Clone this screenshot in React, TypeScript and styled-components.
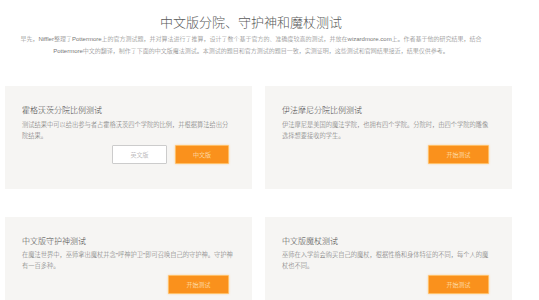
import React from "react";
import styled, { createGlobalStyle } from "styled-components";

const GlobalStyle = createGlobalStyle`
    html, body {
        margin: 0;
        padding: 0;
        background: #ffffff;
        font-family: "Liberation Sans", "Noto Sans CJK SC", sans-serif;
    }
`;

const Page = styled.main`
    width: 539px;
    height: 300px;
    overflow: hidden;
`;

//////////////////////////////////// Cabeçalho
const Header = styled.header`
    width: 502px;
    box-sizing: border-box;
    padding: 14px 17px 0;
    text-align: center;
`;

const Title = styled.h1`
    margin: 0 0 2px;
    font-size: 13px;
    line-height: 18px;
    font-weight: 300;
    color: #5a5a5a;
`;

const Intro = styled.p`
    margin: 0;
    font-size: 6px;
    line-height: 11.5px;
    font-weight: 300;
    color: #777777;
`;
/////////////////////////////////////

//////////////////////////////////// Cartões
const Grid = styled.section`
    display: grid;
    grid-template-columns: 247px 247px;
    column-gap: 13px;
    row-gap: 28px;
    padding: 29px 0 0 5px;
`;

const Card = styled.article`
    display: flex;
    flex-direction: column;
    background: #f6f5f3;
    padding: 19px 23px 25px 17px;
    min-height: 58px;
`;

const CardTitle = styled.h2`
    margin: 0 0 1.5px;
    font-size: 8px;
    line-height: 12px;
    font-weight: 300;
    color: #4a4a4a;
`;

const CardText = styled.p`
    margin: 0 -5px 4px 0;
    font-size: 6.25px;
    line-height: 11px;
    font-weight: 300;
    color: #707070;
    height: 22px;
`;

const Actions = styled.div`
    display: flex;
    justify-content: flex-end;
    gap: 8px;
`;

interface BotaoProps {
    $tipo: "laranja" | "branco";
    $largura: number;
}

const Botao = styled.button<BotaoProps>`
    width: ${props => props.$largura}px;
    height: 19px;
    box-sizing: border-box;
    padding: 0;
    font-family: inherit;
    font-size: 6px;
    font-weight: 300;
    border-radius: 1px;
    cursor: pointer;
    background: ${props => (props.$tipo === "laranja" ? "#fa911c" : "#ffffff")};
    color: ${props => (props.$tipo === "laranja" ? "#fff3dc" : "#999999")};
    border: 1px solid ${props => (props.$tipo === "laranja" ? "#ffbf66" : "#cccccc")};
    box-shadow: ${props => (props.$tipo === "laranja" ? "0 0 2px rgba(255, 170, 60, 0.5)" : "none")};
`;
/////////////////////////////////////

const testes = [
    {
        titulo: "霍格沃茨分院比例测试",
        texto: "测试结果中可以给出参与者占霍格沃茨四个学院的比例，并根据算法给出分院结果。",
        duplo: true,
    },
    {
        titulo: "伊法摩尼分院比例测试",
        texto: "伊法摩尼是美国的魔法学院，也拥有四个学院。分院时，由四个学院的雕像选择想要接收的学生。",
        duplo: false,
    },
    {
        titulo: "中文版守护神测试",
        texto: '在魔法世界中，巫师拿出魔杖并念"呼神护卫"即可召唤自己的守护神。守护神有一百多种。',
        duplo: false,
    },
    {
        titulo: "中文版魔杖测试",
        texto: "巫师在入学前会购买自己的魔杖，根据性格和身体特征的不同，每个人的魔杖也不同。",
        duplo: false,
    },
];

export default function App() {
    return (
        <Page>
            <GlobalStyle />
            <Header>
                <Title>中文版分院、守护神和魔杖测试</Title>
                <Intro>
                    早先，Niffler整理了Pottermore上的官方测试题，并对算法进行了推算，设计了数个基于官方的、准确度较高的测试，并放在wizardmore.com上。作者基于他的研究结果，结合Pottermore中文的翻译，制作了下面的中文版魔法测试。本测试的题目和官方测试的题目一致，实测证明，这些测试和官网结果接近，结果仅供参考。
                </Intro>
            </Header>
            <Grid>
                {testes.map(t => (
                    <Card key={t.titulo}>
                        <CardTitle>{t.titulo}</CardTitle>
                        <CardText>{t.texto}</CardText>
                        <Actions>
                            {t.duplo ? (
                                <>
                                    <Botao $tipo="branco" $largura={55}>英文版</Botao>
                                    <Botao $tipo="laranja" $largura={54}>中文版</Botao>
                                </>
                            ) : (
                                <Botao $tipo="laranja" $largura={61}>开始测试</Botao>
                            )}
                        </Actions>
                    </Card>
                ))}
            </Grid>
        </Page>
    );
}
